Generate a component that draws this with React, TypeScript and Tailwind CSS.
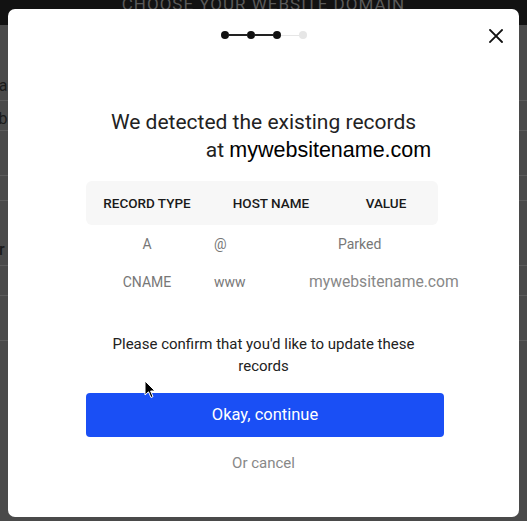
import React from "react";

const bgLines = [100, 130, 175, 200, 265, 295, 340];

export default function App() {
  return (
    <div className="relative w-[527px] h-[521px] overflow-hidden bg-[#4a4a4a]" style={{ fontFamily: "Roboto, 'Liberation Sans', sans-serif" }}>
      {/* background page */}
      <div className="h-[25px] bg-[#121212] flex justify-center">
        <span className="text-[17px] leading-[17px] mt-[-4px] tracking-[1px] text-[#5a5a5a]">CHOOSE YOUR WEBSITE DOMAIN</span>
      </div>
      {bgLines.map((y) => (
        <div key={y} className="absolute left-0 right-0 h-px bg-[#5c5c5c]" style={{ top: y }} />
      ))}
      <span className="absolute left-[-10px] top-[74px] text-[16px] text-[#1a1a1a]">na</span>
      <span className="absolute left-[-6px] top-[107px] text-[16px] text-[#1a1a1a]">-b</span>
      <span className="absolute left-[-5px] top-[238px] text-[16px] font-medium text-[#1a1a1a]">ir</span>

      {/* dialog */}
      <div className="absolute left-[8px] top-[9px] w-[511px] h-[508px] bg-white rounded-[7px] flex flex-col">
        {/* stepper */}
        <div className="mt-[22px] h-[8px] flex items-center justify-center">
          <div className="flex items-center">
            <div className="w-[8px] h-[8px] rounded-full bg-[#111]" />
            <div className="w-[18px] h-[2px] bg-[#222]" />
            <div className="w-[8px] h-[8px] rounded-full bg-[#111]" />
            <div className="w-[18px] h-[2px] bg-[#222]" />
            <div className="w-[8px] h-[8px] rounded-full bg-[#111]" />
            <div className="w-[18px] h-px bg-[#e6e6e6]" />
            <div className="w-[8px] h-[8px] rounded-full bg-[#e6e6e6]" />
          </div>
        </div>
        <button className="absolute left-[481px] top-[20px] w-[14px] h-[14px]">
          <svg viewBox="0 0 14 14" width="14" height="14">
            <path d="M1 1L13 13M13 1L1 13" stroke="#111" strokeWidth="1.8" strokeLinecap="square" />
          </svg>
        </button>

        {/* title */}
        <div className="mt-[69px] flex flex-col items-center text-[21px] leading-[28px] text-[#222]">
          <div>We detected the existing records</div>
          <div className="ml-[110px]">
            at <span className="text-black text-[21.5px]" style={{ fontFamily: "'Liberation Sans', Arial, sans-serif" }}>mywebsitename.com</span>
          </div>
        </div>

        {/* table */}
        <div className="mt-[17px] ml-[78px] w-[352px]">
          <div className="h-[44px] bg-[#f7f7f7] rounded-[6px] grid grid-cols-[122px_126px_104px] items-center text-[13.5px] font-medium text-[#1a1a1a]">
            <div className="text-center">RECORD TYPE</div>
            <div className="text-center">HOST NAME</div>
            <div className="text-center">VALUE</div>
          </div>
          <div className="mt-[9px] h-[20px] grid grid-cols-[122px_126px_104px] items-center text-[14px] text-[#777]">
            <div className="text-center">A</div>
            <div className="pl-[6px]">@</div>
            <div className="pl-[4px]">Parked</div>
          </div>
          <div className="mt-[18px] h-[20px] flex items-center text-[#777] whitespace-nowrap">
            <div className="w-[122px] shrink-0 text-center text-[14px]">CNAME</div>
            <div className="w-[101px] shrink-0 pl-[6px] text-[14px]">www</div>
            <div className="shrink-0 text-[15.7px] text-[#888]">mywebsitename.com</div>
          </div>
        </div>

        {/* confirm */}
        <div className="mt-[41px] text-center text-[15px] leading-[22px] text-[#222]">
          Please confirm that you'd like to update these
          <br />
          records
        </div>

        <button className="mt-[16px] ml-[78px] w-[358px] h-[44px] rounded-[4px] bg-[#1a4ff5] text-white text-[16.5px]">
          Okay, continue
        </button>

        <div className="mt-[16px] text-center text-[15px] leading-[20px] text-[#888]">Or cancel</div>
      </div>

      {/* mouse cursor */}
      <svg className="absolute left-[144px] top-[380px]" width="12" height="19" viewBox="0 0 12 19">
        <path d="M1 1L1 15L4.5 11.8L7 17.5L9 16.6L6.6 11L11 11Z" fill="#000" stroke="#fff" strokeWidth="1" strokeLinejoin="round" />
      </svg>
    </div>
  );
}
